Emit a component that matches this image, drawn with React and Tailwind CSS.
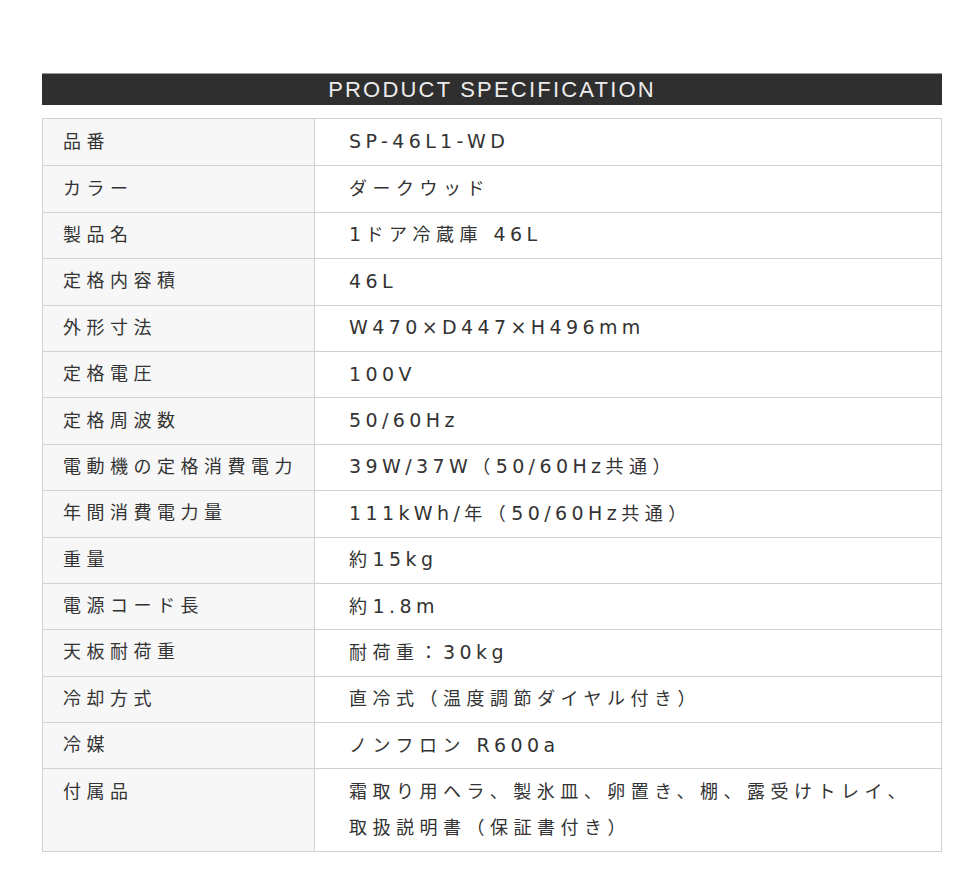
import React from 'react';

const specs = [
    ['品番', 'SP-46L1-WD'],
    ['カラー', 'ダークウッド'],
    ['製品名', '1ドア冷蔵庫 46L'],
    ['定格内容積', '46L'],
    ['外形寸法', 'W470×D447×H496mm'],
    ['定格電圧', '100V'],
    ['定格周波数', '50/60Hz'],
    ['電動機の定格消費電力', '39W/37W（50/60Hz共通）'],
    ['年間消費電力量', '111kWh/年（50/60Hz共通）'],
    ['重量', '約15kg'],
    ['電源コード長', '約1.8m'],
    ['天板耐荷重', '耐荷重：30kg'],
    ['冷却方式', '直冷式（温度調節ダイヤル付き）'],
    ['冷媒', 'ノンフロン R600a'],
];

// Japanese glyphs and latin glyphs get slightly different sizing, like the original page font
function Mixed({ text }) {
    const parts = text.split(/([\u3000-\u9fff\uff00-\uffef]+)/).filter(Boolean);
    return (
        <span className="leading-[26px]">
            {parts.map((p, i) =>
                /[\u3000-\u9fff\uff00-\uffef]/.test(p) ? (
                    <span key={i} className="text-[18px] tracking-[5.5px]">{p}</span>
                ) : (
                    <span key={i} className="font-['DejaVu_Sans',sans-serif] text-[19px] tracking-[4.4px]">{p}</span>
                )
            )}
        </span>
    );
}

export default function App() {
    return (
        <div className="w-[976px] h-[896px] bg-white pt-[73px] px-[42px] font-['Liberation_Sans','Noto_Sans_CJK_JP',sans-serif] text-[#333]">
            {/* Title bar */}
            <div className="h-[32px] w-[900px] bg-[#2f2f2f] border-t border-[#9a9a9a] flex items-center justify-center">
                <span className="text-[22px] tracking-[2.2px] text-[#ececec] leading-none">PRODUCT SPECIFICATION</span>
            </div>

            {/* Spec table */}
            <div className="mt-[13px] w-[900px] border border-[#d2d2d2]">
                {specs.map(([label, value], i) => (
                    <div key={label} className={`flex h-[46.4px] ${i > 0 ? 'border-t border-[#d2d2d2]' : ''}`}>
                        <div className="w-[272px] shrink-0 bg-[#f7f7f7] border-r border-[#d2d2d2] pl-[20px] flex items-center">
                            <Mixed text={label} />
                        </div>
                        <div className="flex-1 pl-[34px] flex items-center">
                            <Mixed text={value} />
                        </div>
                    </div>
                ))}
                <div className="flex border-t border-[#d2d2d2]">
                    <div className="w-[272px] shrink-0 bg-[#f7f7f7] border-r border-[#d2d2d2] pl-[20px] py-[5px] leading-[36px]">
                        <span className="text-[18px] tracking-[5.5px]">付属品</span>
                    </div>
                    <div className="flex-1 pl-[34px] py-[5px] leading-[36px] text-[18px] tracking-[5.5px]">
                        霜取り用ヘラ、製氷皿、卵置き、棚、露受けトレイ、<br />
                        取扱説明書（保証書付き）
                    </div>
                </div>
            </div>
        </div>
    );
}
